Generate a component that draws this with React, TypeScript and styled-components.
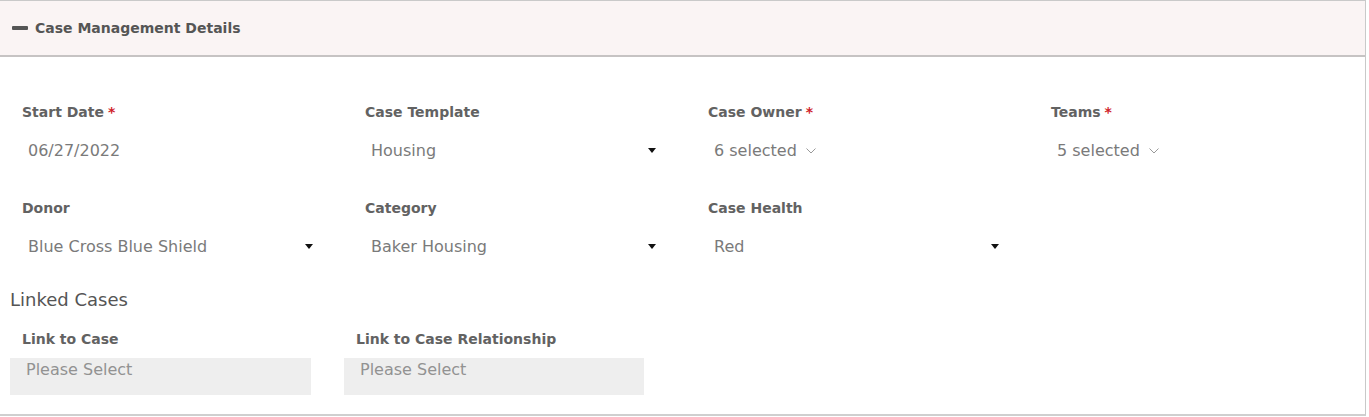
import React from 'react';
import styled, { createGlobalStyle } from 'styled-components';

const GlobalStyle = createGlobalStyle`
  body {
    margin: 0;
    background: #ffffff;
    font-family: "DejaVu Sans", "Open Sans", sans-serif;
  }
`;

interface IField {
	label: string;
	value: string;
	required?: boolean;
	kind: 'text' | 'select' | 'multi';
}

const rows: IField[][] = [
	[
		{label: 'Start Date', value: '06/27/2022', required: true, kind: 'text'},
		{label: 'Case Template', value: 'Housing', kind: 'select'},
		{label: 'Case Owner', value: '6 selected', required: true, kind: 'multi'},
		{label: 'Teams', value: '5 selected', required: true, kind: 'multi'},
	],
	[
		{label: 'Donor', value: 'Blue Cross Blue Shield', kind: 'select'},
		{label: 'Category', value: 'Baker Housing', kind: 'select'},
		{label: 'Case Health', value: 'Red', kind: 'select'},
	],
];

const linked = ['Link to Case', 'Link to Case Relationship'];

const Caret = () => (
	<svg width="8" height="5" viewBox="0 0 8 5">
		<path d="M0 0 L8 0 L4 5 Z" fill="#111"/>
	</svg>
);

const Chevron = () => (
	<svg width="10" height="6" viewBox="0 0 10 6">
		<path d="M0.5 0.5 L5 5 L9.5 0.5" fill="none" stroke="#999" strokeWidth="1"/>
	</svg>
);

const Control: React.FC<{field: IField}> = ({field}) => {
	if (field.kind === 'select') {
		return (
			<Select>
				<Value>{field.value}</Value>
				<Caret/>
			</Select>
		);
	}
	if (field.kind === 'multi') {
		return (
			<Multi>
				<Value>{field.value}</Value>
				<Chevron/>
			</Multi>
		);
	}
	return (
		<TextBox>
			<Value>{field.value}</Value>
		</TextBox>
	);
};

export default function App() {
	return (
		<>
			<GlobalStyle/>
			<Panel>
				<Header>
					<Minus/>
					<HeaderTitle>Case Management Details</HeaderTitle>
				</Header>

				<Body>
					{rows.map((row, i) => (
						<FieldRow key={i}>
							{row.map(field => (
								<Field key={field.label}>
									<Label>
										{field.label}
										{field.required && <Required>*</Required>}
									</Label>
									<Control field={field}/>
								</Field>
							))}
						</FieldRow>
					))}

					<SectionTitle>Linked Cases</SectionTitle>

					<LinkedRow>
						{linked.map(label => (
							<LinkedField key={label}>
								<Label>{label}</Label>
								<Placeholder>Please Select</Placeholder>
							</LinkedField>
						))}
					</LinkedRow>
				</Body>
			</Panel>
		</>
	);
}


const Panel = styled.div`
  width: 1366px;
  border-top: 1px solid #c9c9c9;
  border-right: 1px solid #c9c9c9;
  border-bottom: 2px solid #cfcfcf;
  box-sizing: border-box;
`;

const Header = styled.div`
  height: 54px;
  display: flex;
  align-items: center;
  gap: 7px;
  padding-left: 12px;
  background-color: #faf4f4;
  border-bottom: 2px solid #c6c3c3;
`;

const Minus = styled.span`
  width: 16px;
  height: 4px;
  border-radius: 1px;
  background-color: #555555;
`;

const HeaderTitle = styled.div`
  font-size: 14px;
  font-weight: 700;
  color: #555555;
`;

const Body = styled.div`
  padding: 45px 0 19px 10px;
`;

const FieldRow = styled.div`
  display: grid;
  grid-template-columns: repeat(4, 343px);
  margin-bottom: 30px;

  &:nth-of-type(2) {
    margin-bottom: 23px;
  }
`;

const Field = styled.div`
  padding: 0 12px;
`;

const Label = styled.div`
  height: 20px;
  line-height: 20px;
  font-size: 14px;
  font-weight: 700;
  color: #626262;
  white-space: nowrap;
`;

const Required = styled.span`
  color: #d0222a;
  margin-left: 4px;
`;

const Value = styled.span`
  font-size: 16px;
  color: #7a7a7a;
  white-space: nowrap;
`;

const TextBox = styled.div`
  margin-top: 10px;
  height: 36px;
  display: flex;
  align-items: center;
  padding-left: 6px;
`;

const Select = styled(TextBox)`
  width: 300px;
  box-sizing: border-box;
  padding-right: 9px;
  justify-content: space-between;
`;

const Multi = styled(TextBox)`
  gap: 9px;

  svg {
    margin-top: 2px;
  }
`;

const SectionTitle = styled.div`
  height: 26px;
  line-height: 26px;
  font-size: 18px;
  font-weight: 400;
  color: #555555;
  margin-bottom: 16px;
`;

const LinkedRow = styled.div`
  display: grid;
  grid-template-columns: 301px 300px;
  column-gap: 33px;
`;

const LinkedField = styled.div`
  display: flex;
  flex-direction: column;
  gap: 9px;

  ${Label} {
    padding-left: 12px;
  }
`;

const Placeholder = styled.div`
  height: 37px;
  box-sizing: border-box;
  padding: 2px 16px 0;
  line-height: 20px;
  font-size: 16px;
  color: #929292;
  background-color: #eeeeee;
`;
